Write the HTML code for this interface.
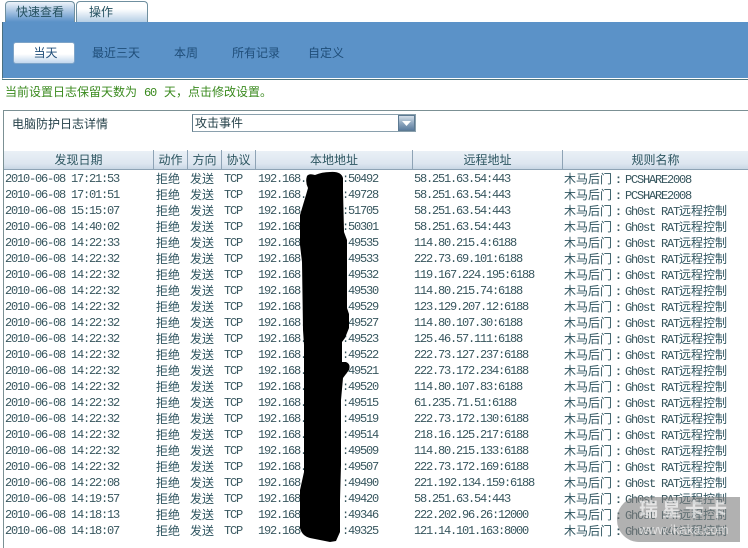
<!DOCTYPE html>
<html><head><meta charset="utf-8"><style>
html,body{margin:0;padding:0;background:#fff;width:748px;height:548px;overflow:hidden}
body{position:relative;font-family:"Liberation Sans","Noto Sans CJK SC",sans-serif;font-size:12px;color:#2f5560}
.a{position:absolute;white-space:nowrap}
.tab{position:absolute;top:1px;height:21px;box-sizing:border-box;border:1px solid #6f8f9f;border-bottom:0;border-radius:4px 4px 0 0;text-align:center;line-height:20px;color:#24505f}
.nav{position:absolute;top:44px;line-height:18px;color:#1f4d78}
.h{position:absolute;top:151px;height:18px;line-height:18px;text-align:center;color:#2c5560}
.s{position:absolute;top:150px;width:1px;height:19px;background:#8ea3b5}
.m{font-family:"Liberation Mono",monospace;letter-spacing:-1.2px}
table{position:absolute;left:0;top:171px;display:block;width:748px;height:368px;overflow:hidden}
tbody{display:block}
tr{display:flex;height:16px}
td{display:block;flex:none;height:16px;padding:0;line-height:16px;white-space:nowrap;overflow:hidden;font-family:"Liberation Mono",monospace;font-size:12px;letter-spacing:-1.2px;color:#37565e}
td:nth-child(1){width:151px;padding-left:5px}
td:nth-child(2),td:nth-child(3),td:nth-child(4){width:34px}
td:nth-child(5){width:156px}
td:nth-child(6){width:150px}
td:nth-child(7){width:184px}
td.c,td i{font-family:"Liberation Sans","Noto Sans CJK SC",sans-serif;font-size:12px;letter-spacing:0;color:#2f5560;font-style:normal}
td em{display:inline-block;width:13px;text-align:center;font-style:normal;font-weight:bold;letter-spacing:0}
td b{font-weight:normal;margin-left:36px}
</style></head><body>
<div class="tab" style="left:5px;width:70px;background:linear-gradient(#eef4fa,#6f9fcf 85%,#5b92c8)">快速查看</div>
<div class="tab" style="left:76px;width:72px;background:linear-gradient(#fff 35%,#b5cee5);text-align:left;padding-left:12px">操作</div>
<div class="a" style="left:2px;top:22px;width:746px;height:57px;background:#5b92c8;border-left:1px solid #4a6f80;border-bottom:1px solid #fff;box-sizing:border-box"></div>
<div class="a" style="left:2px;top:79px;width:746px;height:1px;background:#4f7580"></div>
<div class="a" style="left:13px;top:42px;width:62px;height:22px;box-sizing:border-box;border:1px solid #7ea4c8;border-radius:3px;background:linear-gradient(#fff 55%,#c3d8ee);text-align:center;line-height:20px;color:#1f4d78;padding-left:3px">当天</div>
<div class="nav" style="left:92px">最近三天</div>
<div class="nav" style="left:174px">本周</div>
<div class="nav" style="left:232px">所有记录</div>
<div class="nav" style="left:308px">自定义</div>
<div class="a" style="left:5px;top:84px;height:16px;overflow:hidden;line-height:16px;color:#3a8a1e">当前设置日志保留天数为<span class="m" style="margin-left:7px;margin-right:8px">60</span>天&#xFF0C;点击修改设置。</div>
<div class="a" style="left:3px;top:110px;width:745px;height:1px;background:#7b9094"></div>
<div class="a" style="left:3px;top:110px;width:1px;height:438px;background:#7b9094"></div>
<div class="a" style="left:12px;top:116px;line-height:16px;color:#26424a">电脑防护日志详情</div>
<div class="a" style="left:192px;top:114px;width:224px;height:18px;box-sizing:border-box;border:1px solid #8aa0ad;border-left-color:#5f7a88;background:#fff;line-height:17px;padding-left:2px;color:#26424a">攻击事件</div>
<div class="a" style="left:398px;top:115px;width:17px;height:16px;background:linear-gradient(#dfe7ef,#90a8c0 50%,#54769a);border:0;box-shadow:inset 0 0 0 1px #5d7a92"></div>
<svg class="a" style="left:398px;top:115px" width="17" height="16"><path d="M4 6h9l-4.500 5z" fill="#fff"/></svg>
<div class="a" style="left:4px;top:151px;width:744px;height:18px;background:linear-gradient(#eaf0f6,#dde6f0 70%,#c8d6e4)"></div>
<div class="a" style="left:4px;top:169px;width:744px;height:1px;background:#8ea3b5"></div>
<div class="s" style="left:153px"></div><div class="s" style="left:187px"></div><div class="s" style="left:221px"></div><div class="s" style="left:255px"></div><div class="s" style="left:412px"></div><div class="s" style="left:562px"></div>
<div class="h" style="left:4px;width:149px">发现日期</div>
<div class="h" style="left:154px;width:33px">动作</div>
<div class="h" style="left:188px;width:33px">方向</div>
<div class="h" style="left:222px;width:33px">协议</div>
<div class="h" style="left:256px;width:156px">本地地址</div>
<div class="h" style="left:413px;width:149px">远程地址</div>
<div class="h" style="left:563px;width:185px">规则名称</div>
<table>
<tr><td>2010-06-08 17:21:53</td><td class="c">拒绝</td><td class="c">发送</td><td>TCP</td><td>192.168.<b>:50492</b></td><td>58.251.63.54:443</td><td><i>木马后门</i><em>:</em>PCSHARE2008</td></tr>
<tr><td>2010-06-08 17:01:51</td><td class="c">拒绝</td><td class="c">发送</td><td>TCP</td><td>192.168.<b>:49728</b></td><td>58.251.63.54:443</td><td><i>木马后门</i><em>:</em>PCSHARE2008</td></tr>
<tr><td>2010-06-08 15:15:07</td><td class="c">拒绝</td><td class="c">发送</td><td>TCP</td><td>192.168.<b>:51705</b></td><td>58.251.63.54:443</td><td><i>木马后门</i><em>:</em>Gh0st RAT<i>远程控制</i></td></tr>
<tr><td>2010-06-08 14:40:02</td><td class="c">拒绝</td><td class="c">发送</td><td>TCP</td><td>192.168.<b>:50301</b></td><td>58.251.63.54:443</td><td><i>木马后门</i><em>:</em>Gh0st RAT<i>远程控制</i></td></tr>
<tr><td>2010-06-08 14:22:33</td><td class="c">拒绝</td><td class="c">发送</td><td>TCP</td><td>192.168.<b>:49535</b></td><td>114.80.215.4:6188</td><td><i>木马后门</i><em>:</em>Gh0st RAT<i>远程控制</i></td></tr>
<tr><td>2010-06-08 14:22:32</td><td class="c">拒绝</td><td class="c">发送</td><td>TCP</td><td>192.168.<b>:49533</b></td><td>222.73.69.101:6188</td><td><i>木马后门</i><em>:</em>Gh0st RAT<i>远程控制</i></td></tr>
<tr><td>2010-06-08 14:22:32</td><td class="c">拒绝</td><td class="c">发送</td><td>TCP</td><td>192.168.<b>:49532</b></td><td>119.167.224.195:6188</td><td><i>木马后门</i><em>:</em>Gh0st RAT<i>远程控制</i></td></tr>
<tr><td>2010-06-08 14:22:32</td><td class="c">拒绝</td><td class="c">发送</td><td>TCP</td><td>192.168.<b>:49530</b></td><td>114.80.215.74:6188</td><td><i>木马后门</i><em>:</em>Gh0st RAT<i>远程控制</i></td></tr>
<tr><td>2010-06-08 14:22:32</td><td class="c">拒绝</td><td class="c">发送</td><td>TCP</td><td>192.168.<b>:49529</b></td><td>123.129.207.12:6188</td><td><i>木马后门</i><em>:</em>Gh0st RAT<i>远程控制</i></td></tr>
<tr><td>2010-06-08 14:22:32</td><td class="c">拒绝</td><td class="c">发送</td><td>TCP</td><td>192.168.<b>:49527</b></td><td>114.80.107.30:6188</td><td><i>木马后门</i><em>:</em>Gh0st RAT<i>远程控制</i></td></tr>
<tr><td>2010-06-08 14:22:32</td><td class="c">拒绝</td><td class="c">发送</td><td>TCP</td><td>192.168.<b>:49523</b></td><td>125.46.57.111:6188</td><td><i>木马后门</i><em>:</em>Gh0st RAT<i>远程控制</i></td></tr>
<tr><td>2010-06-08 14:22:32</td><td class="c">拒绝</td><td class="c">发送</td><td>TCP</td><td>192.168.<b>:49522</b></td><td>222.73.127.237:6188</td><td><i>木马后门</i><em>:</em>Gh0st RAT<i>远程控制</i></td></tr>
<tr><td>2010-06-08 14:22:32</td><td class="c">拒绝</td><td class="c">发送</td><td>TCP</td><td>192.168.<b>:49521</b></td><td>222.73.172.234:6188</td><td><i>木马后门</i><em>:</em>Gh0st RAT<i>远程控制</i></td></tr>
<tr><td>2010-06-08 14:22:32</td><td class="c">拒绝</td><td class="c">发送</td><td>TCP</td><td>192.168.<b>:49520</b></td><td>114.80.107.83:6188</td><td><i>木马后门</i><em>:</em>Gh0st RAT<i>远程控制</i></td></tr>
<tr><td>2010-06-08 14:22:32</td><td class="c">拒绝</td><td class="c">发送</td><td>TCP</td><td>192.168.<b>:49515</b></td><td>61.235.71.51:6188</td><td><i>木马后门</i><em>:</em>Gh0st RAT<i>远程控制</i></td></tr>
<tr><td>2010-06-08 14:22:32</td><td class="c">拒绝</td><td class="c">发送</td><td>TCP</td><td>192.168.<b>:49519</b></td><td>222.73.172.130:6188</td><td><i>木马后门</i><em>:</em>Gh0st RAT<i>远程控制</i></td></tr>
<tr><td>2010-06-08 14:22:32</td><td class="c">拒绝</td><td class="c">发送</td><td>TCP</td><td>192.168.<b>:49514</b></td><td>218.16.125.217:6188</td><td><i>木马后门</i><em>:</em>Gh0st RAT<i>远程控制</i></td></tr>
<tr><td>2010-06-08 14:22:32</td><td class="c">拒绝</td><td class="c">发送</td><td>TCP</td><td>192.168.<b>:49509</b></td><td>114.80.215.133:6188</td><td><i>木马后门</i><em>:</em>Gh0st RAT<i>远程控制</i></td></tr>
<tr><td>2010-06-08 14:22:32</td><td class="c">拒绝</td><td class="c">发送</td><td>TCP</td><td>192.168.<b>:49507</b></td><td>222.73.172.169:6188</td><td><i>木马后门</i><em>:</em>Gh0st RAT<i>远程控制</i></td></tr>
<tr><td>2010-06-08 14:22:08</td><td class="c">拒绝</td><td class="c">发送</td><td>TCP</td><td>192.168.<b>:49490</b></td><td>221.192.134.159:6188</td><td><i>木马后门</i><em>:</em>Gh0st RAT<i>远程控制</i></td></tr>
<tr><td>2010-06-08 14:19:57</td><td class="c">拒绝</td><td class="c">发送</td><td>TCP</td><td>192.168.<b>:49420</b></td><td>58.251.63.54:443</td><td><i>木马后门</i><em>:</em>Gh0st RAT<i>远程控制</i></td></tr>
<tr><td>2010-06-08 14:18:13</td><td class="c">拒绝</td><td class="c">发送</td><td>TCP</td><td>192.168.<b>:49346</b></td><td>222.202.96.26:12000</td><td><i>木马后门</i><em>:</em>Gh0st RAT<i>远程控制</i></td></tr>
<tr><td>2010-06-08 14:18:07</td><td class="c">拒绝</td><td class="c">发送</td><td>TCP</td><td>192.168.<b>:49325</b></td><td>121.14.101.163:8000</td><td><i>木马后门</i><em>:</em>Gh0st RAT<i>远程控制</i></td></tr>
</table>
<svg class="a" style="left:0;top:0" width="748" height="548"><path d="M307 176Q309 173 315 175Q322 172 330 172Q341 171 343 178L343 190L344 232L347 240L347 308L349 314L349 328L345 338L342 342L342 362L346 362Q351 364 349 370L343 378L341 400L341 465L340 500L340 532L336 541L330 542L310 538Q302 536 300 528L300 490L304 472L304 345L303 330L302 262L300 245L300 215L306 195L308 188Q305 182 307 176Z" fill="#000"/></svg>
<div class="a" style="left:617px;top:497px;width:123px;height:45px;background:rgba(125,125,125,.6);border-radius:22px 0 0 22px;overflow:hidden">
<div class="a" style="left:22px;top:3px;font-size:19px;line-height:22px;font-weight:bold;color:rgba(255,255,255,.65);letter-spacing:4px">瑞星卡卡</div>
<div class="a" style="left:22px;top:25px;font-size:13px;line-height:16px;color:rgba(255,255,255,.6)">www.ikaka.com</div></div>
</body></html>
